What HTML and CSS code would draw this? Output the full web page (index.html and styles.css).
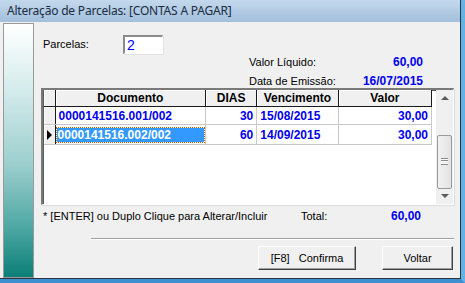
FILE: index.html
```html
<!DOCTYPE html>
<html lang="pt-BR">
<head>
  <meta charset="UTF-8">
  <title>Alteração de Parcelas</title>
  <link rel="stylesheet" href="styles.css">
</head>
<body>
  <div class="window">
    <div class="titlebar">Alteração de Parcelas: [CONTAS A PAGAR]</div>
    <div class="client">
      <div class="strip"></div>
      <div class="content">
        <div class="row-parcelas">
          <span class="lbl">Parcelas:</span>
          <div class="edit">2</div>
        </div>
        <div class="info">
          <span class="lbl">Valor Líquido:</span>
          <span class="val">60,00</span>
        </div>
        <div class="info">
          <span class="lbl">Data de Emissão:</span>
          <span class="val">16/07/2015</span>
        </div>

        <div class="grid">
          <table>
            <colgroup>
              <col class="c-ind"><col class="c-doc"><col class="c-dias"><col class="c-venc"><col class="c-valor">
            </colgroup>
            <tr class="head">
              <th></th><th>Documento</th><th>DIAS</th><th>Vencimento</th><th>Valor</th>
            </tr>
            <tr>
              <td class="ind"></td>
              <td>0000141516.001/002</td>
              <td class="num">30</td>
              <td>15/08/2015</td>
              <td class="num">30,00</td>
            </tr>
            <tr class="cur">
              <td class="ind"><span class="arrow"></span></td>
              <td class="sel"><span>0000141516.002/002</span></td>
              <td class="num">60</td>
              <td>14/09/2015</td>
              <td class="num">30,00</td>
            </tr>
          </table>
          <div class="scroll">
            <div class="sbtn"><span class="up"></span></div>
            <div class="track">
              <div class="thumb"><span class="grip"></span></div>
            </div>
            <div class="sbtn"><span class="down"></span></div>
          </div>
        </div>

        <div class="foot">
          <span class="hint">* [ENTER] ou Duplo Clique para Alterar/Incluir</span>
          <span class="total">Total:</span>
          <span class="val">60,00</span>
        </div>
        <div class="sep"></div>
        <div class="buttons">
          <button class="btn">[F8]&nbsp;&nbsp; Confirma</button>
          <button class="btn">Voltar</button>
        </div>
      </div>
    </div>
  </div>
</body>
</html>
```

FILE: styles.css
```css
html, body {
  margin: 0;
  padding: 0;
  background: #f0f0f0;
  overflow: hidden;
}

.window {
  width: 465px;
  height: 283px;
  box-sizing: border-box;
  background: #f0f0f0;
  border-right: 4px solid #62b3e6;
  border-bottom: 4px solid #3d8fd0;
  font-family: "Liberation Sans", Arial, sans-serif;
  font-size: 11px;
  color: #000;
}

.titlebar {
  height: 22px;
  line-height: 21px;
  padding-left: 7px;
  background: linear-gradient(#c3d8ec, #a2bfdc);
  font-family: "Noto Sans", sans-serif;
  font-size: 12px;
  letter-spacing: -0.2px;
  color: #1a2c40;
  border-right: 1px solid #2a3340;
}

.client {
  display: flex;
  height: 256px;
  border-right: 1px solid #2a3340;
  border-bottom: 1px solid #2a3340;
}

.strip {
  width: 29px;
  margin: 1px 0 0 3px;
  border: 1px solid #9a9a9a;
  background: linear-gradient(#ffffff 0%, #d6ecec 25%, #9ecfcf 55%, #4fa8a4 80%, #0b7f77 100%);
}

.content {
  flex: 1;
  padding-left: 9px;
  padding-right: 5px;
}

/* parcelas + campos informativos */
.row-parcelas {
  display: flex;
  align-items: center;
  height: 20px;
  margin-top: 12px;
}
.row-parcelas .lbl {
  width: 80px;
}
.edit {
  width: 35px;
  height: 16px;
  background: #fff;
  border-top: 2px solid #8a8a8a;
  border-left: 2px solid #8a8a8a;
  border-right: 1px solid #fff;
  border-bottom: 1px solid #fff;
  box-shadow: 1px 1px 0 #e3e3e3;
  color: #0000ff;
  font-size: 14px;
  line-height: 17px;
  padding-left: 2px;
}

.info {
  display: flex;
  align-items: center;
  height: 17px;
  padding-left: 206px;
  width: 174px;
}
.info .lbl { flex: 1; }
.row-parcelas + .info { margin-top: -1px; }
.info + .info {
  height: 18px;
  margin-top: 2px;
}

.val {
  color: #0000ee;
  font-weight: bold;
  font-size: 12px;
}

/* grade */
.grid {
  display: flex;
  margin: -2px 0 0 -2px;
  width: 410px;
  height: 114px;
  background: #fff;
  border-top: 2px solid #7a7a7a;
  border-left: 2px solid #7a7a7a;
  border-right: 1px solid #fff;
  border-bottom: 1px solid #fff;
  box-shadow: 1px 1px 0 #dcdcdc, inset 1px 1px 0 #5a5a5a;
}

table {
  border-collapse: collapse;
  table-layout: fixed;
  width: 388px;
  height: 54px;
  margin-left: 1px;
}
col.c-ind { width: 11px; }
col.c-doc { width: 150px; }
col.c-dias { width: 51px; }
col.c-venc { width: 81px; }
col.c-valor { width: 93px; }

th {
  height: 16px;
  padding: 0;
  background: #f0f0f0;
  font-weight: bold;
  font-size: 12px;
  text-align: center;
  border-right: 1px solid #1a1a1a;
  border-bottom: 1px solid #1a1a1a;
  box-shadow: inset 1px 1px 0 #fff;
}

td {
  height: 17px;
  padding: 0 3px;
  color: #0000ee;
  font-weight: bold;
  font-size: 12px;
  white-space: nowrap;
  border-right: 1px solid #c8c8c8;
  border-bottom: 1px solid #c8c8c8;
}
td.num { text-align: right; }
td.ind {
  background: #f0f0f0;
  border-right: 1px solid #1a1a1a;
  padding: 0;
  box-shadow: inset 1px 1px 0 #fff;
}
.arrow {
  display: block;
  width: 0;
  height: 0;
  margin-left: 3px;
  border-top: 5px solid transparent;
  border-bottom: 5px solid transparent;
  border-left: 5px solid #000;
}

td.sel {
  padding: 1px;
}
td.sel span {
  display: block;
  height: 14px;
  line-height: 14px;
  padding-left: 1px;
  background: #3399ff;
  color: #fff;
  outline: 1px dotted #c06000;
}

/* barra de rolagem */
.scroll {
  display: flex;
  flex-direction: column;
  width: 17px;
  margin-left: 4px;
  background: #f0f0f0;
}
.sbtn {
  height: 17px;
  display: flex;
  align-items: center;
  justify-content: center;
}
.up {
  border-left: 4px solid transparent;
  border-right: 4px solid transparent;
  border-bottom: 4px solid #5a5a5a;
}
.down {
  border-left: 4px solid transparent;
  border-right: 4px solid transparent;
  border-top: 4px solid #5a5a5a;
}
.track {
  flex: 1;
  display: flex;
  flex-direction: column;
  padding-top: 29px;
}
.thumb {
  height: 52px;
  margin: 0 1px;
  border: 1px solid #9a9a9a;
  border-radius: 2px;
  background: linear-gradient(90deg, #f2f2f2, #e2e2e2);
  display: flex;
  align-items: center;
  justify-content: center;
}
.grip {
  width: 7px;
  height: 5px;
  border-top: 1px solid #8a8a8a;
  border-bottom: 1px solid #8a8a8a;
  background: linear-gradient(#fff 0 1px, #8a8a8a 1px 2px, #fff 2px 3px, transparent 3px);
  background-size: 7px 4px;
}

/* rodape */
.foot {
  display: flex;
  align-items: center;
  height: 20px;
  margin-top: 1px;
}
.foot .hint { width: 258px; }
.foot .total { width: 90px; }

.sep {
  margin: 12px 0 0 48px;
  width: 363px;
  height: 0;
  border-top: 1px solid #a0a0a0;
  border-bottom: 1px solid #fff;
}

.buttons {
  display: flex;
  justify-content: flex-end;
  gap: 26px;
  margin-top: 6px;
  padding-right: 2px;
}
.btn {
  height: 24px;
  font-family: "Liberation Sans", Arial, sans-serif;
  font-size: 11px;
  color: #000;
  background: #f0f0f0;
  border-top: 1px solid #fff;
  border-left: 1px solid #fff;
  border-right: 1px solid #404040;
  border-bottom: 1px solid #404040;
  box-shadow: inset -1px -1px 0 #a0a0a0;
  padding: 0;
}
.btn:first-child { width: 98px; }
.btn:last-child { width: 71px; }
```
